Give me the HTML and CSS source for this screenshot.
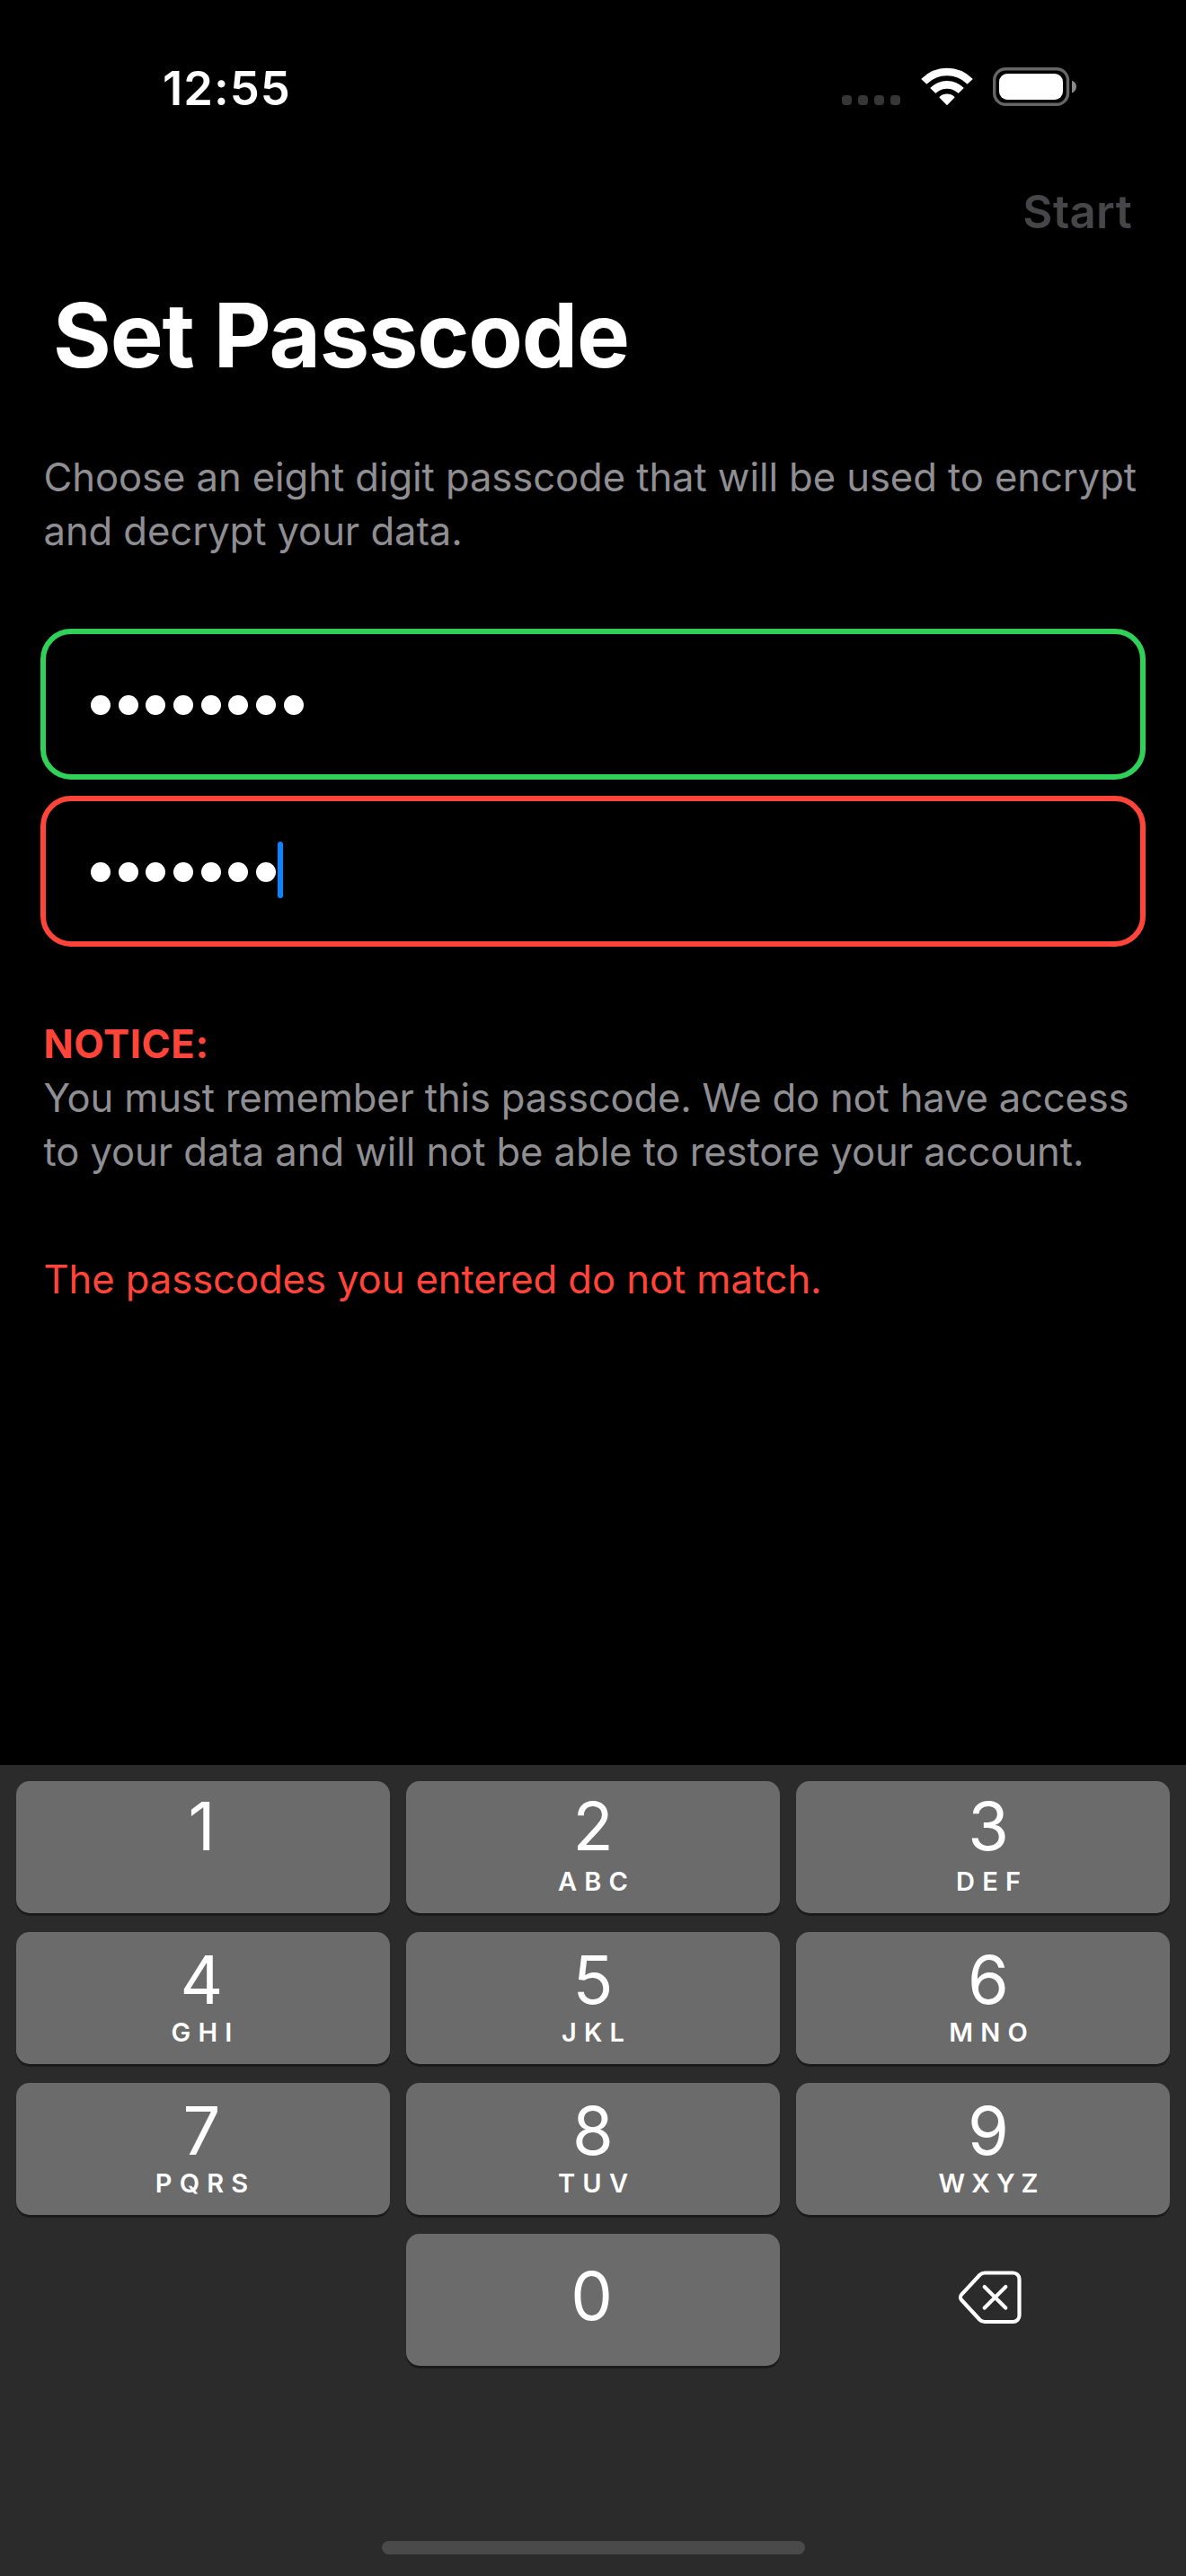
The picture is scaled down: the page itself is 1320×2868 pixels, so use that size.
FILE: index.html
```html
<!DOCTYPE html>
<html lang="en">
<head>
<meta charset="utf-8">
<title>Set Passcode</title>
<link rel="stylesheet" href="styles.css">
</head>
<body>
<div class="screen">
  <header class="status-bar">
    <span class="time">12:55</span>
    <div class="status-icons">
      <div class="signal"><i></i><i></i><i></i><i></i></div>
      <svg class="wifi" viewBox="0 0 58 43" width="58" height="43">
        <g fill="#fff" stroke="#fff" stroke-width="1.4" stroke-linejoin="round">
          <path d="M1.2 13 A39 39 0 0 1 56.8 13 L51.6 17.7 A32.5 32.5 0 0 0 6.4 17.7 Z"/>
          <path d="M11.2 23.1 A25 25 0 0 1 46.8 23.1 L41.6 28 A18.2 18.2 0 0 0 16.4 28 Z"/>
          <path d="M21.2 33.3 A11.6 11.6 0 0 1 36.8 33.3 L29 41.3 Z"/>
        </g>
      </svg>
      <svg class="battery" viewBox="0 0 94 43" width="94" height="43">
        <rect x="1.7" y="1.7" width="81.8" height="39.6" rx="12.6" fill="none" stroke="#666" stroke-width="3.4"/>
        <rect x="7" y="7" width="71" height="29" rx="9" fill="#fff"/>
        <path d="M88 14.7 C91 15.6 93 18.3 93 21.6 C93 24.9 91 27.6 88 28.5 Z" fill="#8a8a8a"/>
      </svg>
    </div>
  </header>
  <nav class="nav-bar"><span class="start">Start</span></nav>
  <h1 class="title">Set Passcode</h1>
  <p class="text intro">Choose an eight digit passcode that will be used to encrypt<br>and decrypt your data.</p>
  <div class="fields">
    <div class="field valid"><i class="dot"></i><i class="dot"></i><i class="dot"></i><i class="dot"></i><i class="dot"></i><i class="dot"></i><i class="dot"></i><i class="dot"></i></div>
    <div class="field invalid"><i class="dot"></i><i class="dot"></i><i class="dot"></i><i class="dot"></i><i class="dot"></i><i class="dot"></i><i class="dot"></i><i class="caret"></i></div>
  </div>
  <p class="notice">NOTICE:</p>
  <p class="text warning"><span class="tight">You must remember this passcode. We do not have access</span><br>to your data and will not be able to restore your account.</p>
  <p class="text error">The passcodes you entered do not match.</p>

  <div class="keyboard">
    <div class="keys">
      <div class="key top left"><span class="digit">1</span></div>
      <div class="key top"><span class="digit">2</span><span class="letters">ABC</span></div>
      <div class="key top right"><span class="digit">3</span><span class="letters">DEF</span></div>
      <div class="key left"><span class="digit">4</span><span class="letters">GHI</span></div>
      <div class="key"><span class="digit">5</span><span class="letters">JKL</span></div>
      <div class="key right"><span class="digit">6</span><span class="letters">MNO</span></div>
      <div class="key left"><span class="digit">7</span><span class="letters">PQRS</span></div>
      <div class="key"><span class="digit">8</span><span class="letters">TUV</span></div>
      <div class="key right"><span class="digit">9</span><span class="letters narrow">WXYZ</span></div>
      <div class="blank"></div>
      <div class="key zero"><span class="digit">0</span></div>
      <div class="delete">
        <svg viewBox="0 0 72 62" width="72" height="62" fill="none" stroke="#fff" stroke-width="4.2" stroke-linecap="round" stroke-linejoin="round">
          <path d="M30 3.5 H61.5 A7 7 0 0 1 68.5 10.5 V51 A7 7 0 0 1 61.5 58 H30 C28 58 26 57.2 24.5 55.7 L4.2 33.8 A4.5 4.5 0 0 1 4.2 27.7 L24.5 5.8 C26 4.3 28 3.5 30 3.5 Z"/>
          <path d="M29.7 19 L53.3 42.4 M53.3 19 L29.7 42.4"/>
        </svg>
      </div>
    </div>
    <div class="home-indicator"></div>
  </div>
</div>
</body>
</html>
```
FILE: styles.css
```css
* {
  box-sizing: border-box;
}

body {
  margin: 0;
  background: #000;
  font-family: Inter, "Liberation Sans", sans-serif;
}

.screen {
  display: flex;
  flex-direction: column;
  width: 1320px;
  height: 2868px;
  overflow: hidden;
  background: #000;
  color: #fff;
}

/* Status bar */
.status-bar {
  display: flex;
  justify-content: space-between;
  align-items: flex-start;
  height: 177px;
  padding: 68px 121px 0 181px;
}

.time {
  font-size: 52.5px;
  font-weight: 600;
  line-height: 60px;
  letter-spacing: 1px;
}

.status-icons {
  display: flex;
  align-items: flex-end;
  margin-top: 7px;
}

.signal {
  display: flex;
  gap: 7px;
  margin: 0 22.5px 1px 0;
}

.signal i {
  width: 11px;
  height: 11px;
  border-radius: 4px;
  background: #363636;
}

.wifi {
  margin-right: 22.5px;
}

/* Navigation */
.nav-bar {
  display: flex;
  justify-content: flex-end;
  align-items: center;
  height: 117px;
  padding-right: 60px;
}

.start {
  color: #464648;
  font-size: 51px;
  font-weight: 600;
  line-height: 60px;
  letter-spacing: 0.35px;
}

.title {
  margin: 19px 0 0 59px;
  font-size: 99px;
  font-weight: 700;
  line-height: 120px;
  letter-spacing: -1.19px;
}

/* Body copy */
.text {
  margin: 0 0 0 48.5px;
  color: #8e8e93;
  font-size: 43.6px;
  line-height: 60px;
  letter-spacing: -0.08px;
  white-space: nowrap;
}

.intro {
  margin-top: 69px;
}

.tight {
  letter-spacing: -0.18px;
}

.notice {
  margin: 78px 0 0 48.5px;
  color: #ff453a;
  font-size: 43.6px;
  font-weight: 700;
  line-height: 61px;
  letter-spacing: 0.57px;
}

.error {
  margin-top: 82px;
  color: #ff453a;
}

/* Passcode fields */
.fields {
  display: flex;
  flex-direction: column;
  gap: 18px;
  margin: 78px 45px 0;
}

.field {
  display: flex;
  align-items: center;
  gap: 8.7px;
  height: 168px;
  padding: 2px 50px 0;
  border: 6px solid;
  border-radius: 34px;
}

.valid {
  border-color: #30d158;
}

.invalid {
  border-color: #ff453a;
}

.dot {
  width: 22px;
  height: 22px;
  border-radius: 50%;
  background: #fff;
}

.caret {
  width: 6px;
  height: 63px;
  margin: 0 0 5px -7px;
  border-radius: 3px;
  background: #0a84ff;
}

/* Number pad */
.keyboard {
  display: flex;
  flex-direction: column;
  justify-content: space-between;
  align-items: center;
  height: 903px;
  margin-top: auto;
  padding: 18px 18px 24px;
  background: #2b2b2b;
}

.keys {
  display: grid;
  grid-template-columns: repeat(3, 416px);
  grid-auto-rows: 147px;
  gap: 21px 18px;
}

.key {
  display: flex;
  flex-direction: column;
  align-items: center;
  gap: 7px;
  padding-top: 16px;
  border-radius: 15px;
  background: #6b6b6b;
  box-shadow: 0 3px 0 #1b1b1b;
}

.key.top {
  gap: 10px;
  padding-top: 13px;
}

.key.left {
  padding-right: 3px;
}

.key.right {
  padding-left: 12px;
}

.key.zero {
  padding-top: 32px;
  padding-right: 3px;
}

.digit {
  font-size: 74px;
  font-weight: 400;
  line-height: 74px;
}

.letters {
  margin-right: -8.2px;
  font-size: 29px;
  font-weight: 600;
  line-height: 30px;
  letter-spacing: 8.2px;
}

.letters.narrow {
  margin-right: -7px;
  letter-spacing: 7px;
}

.delete {
  display: flex;
  justify-content: center;
  align-items: center;
  padding: 0 0 5px 16px;
}

.home-indicator {
  width: 471px;
  height: 15px;
  border-radius: 8px;
  background: #4a4a4a;
}
```
